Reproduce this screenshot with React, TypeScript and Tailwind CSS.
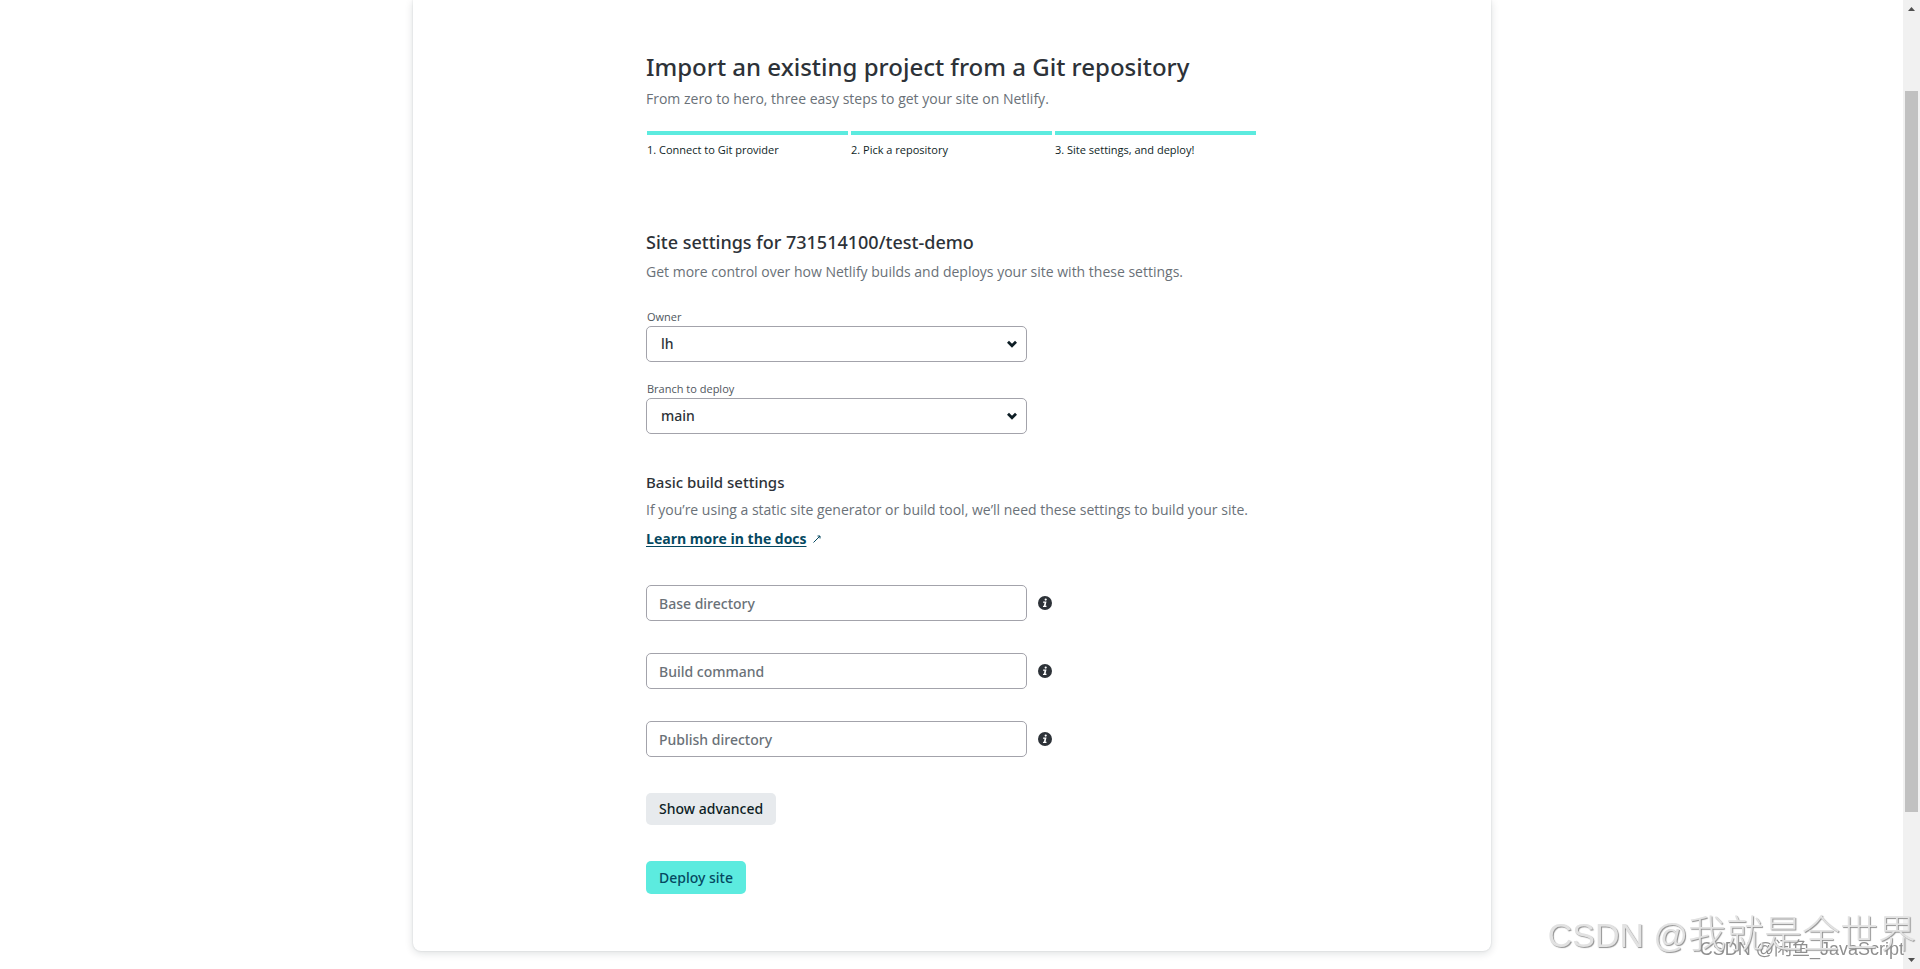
import { useState } from "react";

const steps = ["1. Connect to Git provider", "2. Pick a repository", "3. Site settings, and deploy!"];

const buildFields = [
    { id: "base", label: "Base directory" },
    { id: "command", label: "Build command" },
    { id: "publish", label: "Publish directory" },
];

function InfoIcon() {
    return (
        <svg className="w-3.5 h-3.5" viewBox="0 0 14 14" aria-hidden="true">
            <circle cx="7" cy="7" r="7" fill="#2d3238" />
            <circle cx="7.7" cy="3.6" r="1.1" fill="#fff" />
            <path d="M5.2 5.6h3.3L7.6 9.8h1l-.2 1.1H4.9l.2-1.1h.8l.6-3.1H5z" fill="#fff" />
        </svg>
    );
}

function SelectField({ id, label, options }: { id: string; label: string; options: string[] }) {
    return (
        <div>
            <label htmlFor={id} className="block pl-px text-[11px] leading-[18px] text-[#4f565d]">
                {label}
            </label>
            <div className="grid w-[381px] items-center">
                <select
                    id={id}
                    className="col-start-1 row-start-1 h-9 appearance-none rounded-[5px] border border-[#a3a3ab] bg-white px-3.5 font-['Noto_Sans',sans-serif] text-sm font-medium text-[#2d3238]"
                >
                    {options.map((option) => (
                        <option key={option}>{option}</option>
                    ))}
                </select>
                <svg className="col-start-1 row-start-1 mr-2.5 h-2 w-2.5 justify-self-end pointer-events-none" viewBox="0 0 10 8" aria-hidden="true">
                    <path d="M1 1.7 5 5.7l4-4" fill="none" stroke="#0e1e25" strokeWidth="2.8" />
                </svg>
            </div>
        </div>
    );
}

function Scrollbar() {
    return (
        <div className="sticky top-0 flex h-screen w-[17px] shrink-0 flex-col items-center justify-between bg-[#f1f1f1] py-1.5" aria-hidden="true">
            <svg className="h-[5px] w-[7px]" viewBox="0 0 7 5">
                <path d="M0 5 3.5 1 7 5z" fill="#505050" />
            </svg>
            <div className="flex w-[13px] flex-1 flex-col pt-20 pb-[146px]">
                <div className="flex-1 bg-[#c1c1c1]" />
            </div>
            <svg className="h-[5px] w-[7px]" viewBox="0 0 7 5">
                <path d="M0 0 3.5 4 7 0z" fill="#505050" />
            </svg>
        </div>
    );
}

export default function App() {
    const [values, setValues] = useState<Record<string, string>>({});

    return (
        <div className="flex min-h-screen bg-white font-['Open_Sans','Noto_Sans',sans-serif] text-[#2d3238]">
            <main className="flex-1 pb-4">
                <div className="mx-auto max-w-[1078px] rounded-b-lg bg-white px-6 pt-[49px] pb-[57px] shadow-[0_2px_8px_rgba(14,30,37,0.14),0_0_2px_rgba(14,30,37,0.14)]">
                    <div className="mx-auto max-w-[611px]">
                        <h1 className="font-['Noto_Sans',sans-serif] text-2xl leading-9 font-medium">Import an existing project from a Git repository</h1>
                        <p className="mt-1 text-sm leading-5 text-[#6a7178]">From zero to hero, three easy steps to get your site on Netlify.</p>
                        <ol className="mt-[22px] grid grid-cols-3 gap-[3px] px-px">
                            {steps.map((step) => (
                                <li key={step} className="border-t-4 border-[#5cebdf] pt-1.5 text-[11px] leading-[18px] text-[#0e1e25]">
                                    {step}
                                </li>
                            ))}
                        </ol>

                        <h2 className="mt-[69px] font-['Noto_Sans',sans-serif] text-lg leading-7 font-medium">Site settings for 731514100/test-demo</h2>
                        <p className="mt-1.5 text-sm leading-5 text-[#6a7178]">Get more control over how Netlify builds and deploys your site with these settings.</p>

                        <div className="mt-[26px] flex flex-col gap-[18px]">
                            <SelectField id="owner" label="Owner" options={["lh"]} />
                            <SelectField id="branch" label="Branch to deploy" options={["main"]} />
                        </div>

                        <h3 className="mt-9 font-['Noto_Sans',sans-serif] text-[15px] leading-6 font-medium">Basic build settings</h3>
                        <p className="mt-1.5 text-sm leading-5 text-[#6a7178]">If you’re using a static site generator or build tool, we’ll need these settings to build your site.</p>
                        <p className="mt-[9px] text-sm leading-5">
                            <a href="#docs" className="inline-flex items-center gap-1.5 font-bold text-[#054861]">
                                <span className="underline underline-offset-2">Learn more in the docs</span>
                                <svg className="h-2 w-2" viewBox="0 0 8 8" fill="none" stroke="currentColor" aria-hidden="true">
                                    <path d="M.5 7.5 7 1M4.5 1H7v2.5" />
                                </svg>
                            </a>
                        </p>

                        <form className="mt-9" onSubmit={(e) => e.preventDefault()}>
                            <div className="flex flex-col gap-8">
                                {buildFields.map(({ id, label }) => (
                                    <div key={id} className="flex items-center gap-[11px]">
                                        <input
                                            id={id}
                                            type="text"
                                            aria-label={label}
                                            placeholder={label}
                                            value={values[id] ?? ""}
                                            onChange={(e) => setValues({ ...values, [id]: e.target.value })}
                                            className="h-9 w-[381px] rounded-[5px] border border-[#a3a3ab] px-3 font-['Noto_Sans',sans-serif] text-sm font-medium placeholder:text-[#6a7178]"
                                        />
                                        <button type="button" aria-label={`About ${label}`}>
                                            <InfoIcon />
                                        </button>
                                    </div>
                                ))}
                            </div>
                            <div className="mt-9 flex flex-col items-start gap-9">
                                <button type="button" className="h-8 rounded-[5px] bg-[#e7eaed] px-[13px] font-['Noto_Sans',sans-serif] text-sm font-medium text-[#0e1e25]">
                                    Show advanced
                                </button>
                                <button type="submit" className="h-[33px] rounded-[5px] bg-[#5cebdf] px-[13px] font-['Noto_Sans',sans-serif] text-sm font-medium text-[#054861]">
                                    Deploy site
                                </button>
                            </div>
                        </form>
                    </div>
                </div>
            </main>
            <Scrollbar />

            {/* watermarks, above everything including the scrollbar */}
            <div className="pointer-events-none fixed right-4 bottom-2 font-['Liberation_Sans','Noto_Sans_CJK_SC',sans-serif] text-lg leading-6 text-[#8f8f8f]">
                CSDN @闲鱼_JavaScript
            </div>
            <div className="pointer-events-none fixed right-1 bottom-3 font-['Liberation_Sans','Noto_Sans_CJK_SC',sans-serif] text-[34px] leading-[44px] font-light text-[#e2e2e2] [text-shadow:1px_1px_1px_#909090]">
                CSDN @<span className="text-[38px]">我就是全世界</span>
            </div>
        </div>
    );
}
